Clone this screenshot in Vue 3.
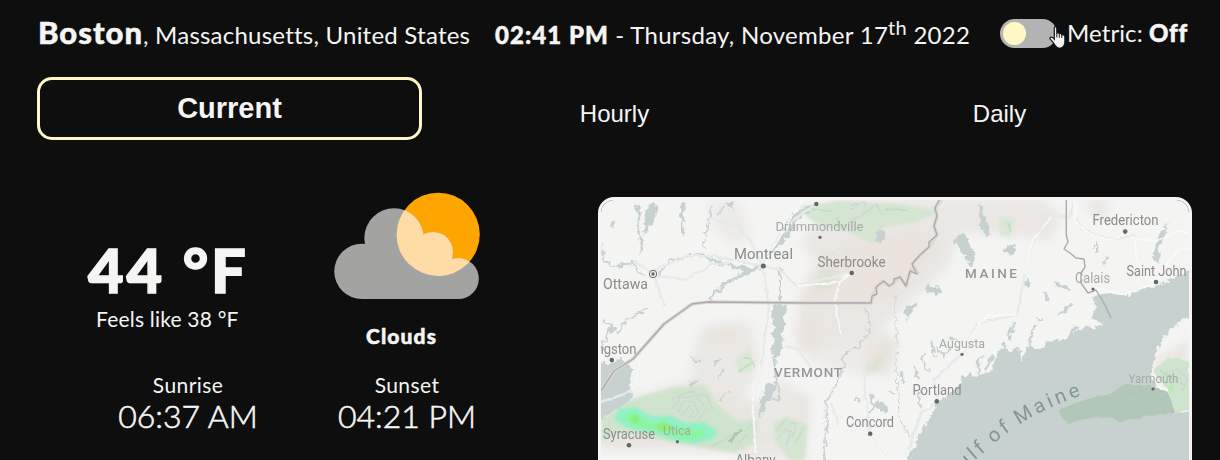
<script setup>
const tabs = [
  { label: 'Current', active: true },
  { label: 'Hourly', active: false },
  { label: 'Daily', active: false },
]
const cities = [
  { n: 'Ottawa', x: 603, y: 289, w: 45, s: 14.5 },
  { n: 'Montreal', x: 734, y: 258.5, w: 59, s: 15 },
  { n: 'Drummondville', x: 775.5, y: 231, w: 88, s: 13.5, dx: 820, dy: 237.3, light: true },
  { n: 'Sherbrooke', x: 817.5, y: 267, w: 68, s: 13.8, dx: 851.7, dy: 273 },
  { n: 'Fredericton', x: 1092.5, y: 224.7, w: 66, s: 13.8, dx: 1125.2, dy: 231.6 },
  { n: 'Calais', x: 1075, y: 283, w: 35, s: 13.8, dx: 1093, dy: 289, light: true },
  { n: 'Saint John', x: 1126.5, y: 276, w: 60, s: 13.8, dx: 1156, dy: 282 },
  { n: 'Syracuse', x: 603, y: 439, w: 52, s: 13.8, dx: 629, dy: 445.3 },
  { n: 'Utica', x: 663, y: 435.3, w: 28, s: 13, dx: 677.4, dy: 441.7, light: true },
  { n: 'Concord', x: 846, y: 427.3, w: 48, s: 13.8, dx: 870.2, dy: 433.8 },
  { n: 'Portland', x: 912.5, y: 395, w: 49, s: 13.8, dx: 936.8, dy: 401.4 },
  { n: 'Augusta', x: 939, y: 348, w: 46, s: 13.5, dx: 962, dy: 354.3, light: true },
  { n: 'Yarmouth', x: 1128.5, y: 383, w: 50, s: 12.5, dx: 1153, dy: 389, light: true },
  { n: 'Albany', x: 735.5, y: 464.5, w: 40, s: 13.8 },
]
</script>

<template>
  <main class="app">
    <header class="header">
      <div class="place"><b>Boston</b><span>, Massachusetts, United States</span></div>
      <div class="date"><b>02:41 PM</b><span> - Thursday, November 17<sup>th</sup> 2022</span></div>
      <div class="units">
        <span class="switch"><i></i></span>
        <span class="metric">Metric: <b>Off</b></span>
        <svg class="cursor" width="18" height="23" viewBox="0 0 18 23">
          <path d="M5.3 2.2Q5.3 .7 6.5 .7T7.8 2.2V7.4Q8 6.5 9 6.6T10.3 8Q10.5 7.2 11.6 7.4T12.8 9Q13.2 8.4 14.2 8.7T15.9 10.6V16Q15.9 18.2 14.8 19.8Q13.6 22.3 10.8 22.3Q7.7 22.3 6.1 19.4L3.9 16.1L.9 12.8Q.7 11.3 2 11Q3.5 10.9 5.3 13.2Z" fill="#f5f5f4" stroke="#111218" stroke-width="1.2" />
          <path d="M7.8 7V11.4M10.3 8V11.7M12.8 8.9V12" stroke="#222" fill="none" />
        </svg>
      </div>
    </header>

    <nav class="tabs">
      <button v-for="t in tabs" :key="t.label" :class="{ active: t.active }">{{ t.label }}</button>
    </nav>

    <section class="content">
      <div class="weather">
        <div class="temp">
          <div class="degrees">44 °F</div>
          <div class="feels">Feels like 38 °F</div>
        </div>
        <div class="sky">
          <svg width="148" height="110" viewBox="333 191 148 110">
            <defs>
              <clipPath id="sun"><circle cx="438.2" cy="234.3" r="41.6" /></clipPath>
              <g id="cloud">
                <circle cx="362" cy="271.4" r="27.7" />
                <circle cx="394" cy="238" r="29.7" />
                <circle cx="433" cy="252" r="20" />
                <circle cx="458.3" cy="278.6" r="20.5" />
                <path d="M362 244H366V236H423L452 257L458 299.1H362Z" />
              </g>
            </defs>
            <circle cx="438.2" cy="234.3" r="41.6" fill="#ffa500" />
            <use href="#cloud" fill="#a3a3a2" />
            <use href="#cloud" fill="#ffdba5" clip-path="url(#sun)" />
          </svg>
          <b>Clouds</b>
        </div>
        <div class="event rise"><span>Sunrise</span><strong>06:37 AM</strong></div>
        <div class="event set"><span>Sunset</span><strong>04:21 PM</strong></div>
      </div>

      <div class="map">
        <svg width="588" height="260" viewBox="601 200 588 260">
          <defs>
            <filter id="rough" x="-5%" y="-5%" width="110%" height="110%">
              <feTurbulence type="fractalNoise" baseFrequency=".16" numOctaves="3" seed="4" />
              <feDisplacementMap in="SourceGraphic" scale="9" xChannelSelector="R" yChannelSelector="G" />
            </filter>
            <filter id="fine" x="-5%" y="-5%" width="110%" height="110%">
              <feTurbulence type="fractalNoise" baseFrequency=".12" numOctaves="2" seed="8" />
              <feDisplacementMap in="SourceGraphic" scale="4" xChannelSelector="R" yChannelSelector="G" />
            </filter>
            <filter id="soft" x="-20%" y="-20%" width="140%" height="140%"><feGaussianBlur stdDeviation="5" /></filter>
            <filter id="glow" x="-20%" y="-20%" width="140%" height="140%"><feGaussianBlur stdDeviation="1.6" /></filter>
            <path id="gulf" d="M945 487Q968 466 990 447T1027 420Q1050 406 1085 394" />
          </defs>
          <rect x="601" y="200" width="588" height="260" fill="#f4f4f3" />

          <g filter="url(#soft)" fill="#e9e6e2">
            <path d="M708 200H738L752 236L732 246L712 224Z" opacity=".6" />
            <path d="M835 200H1040L1062 215L1050 240L1010 235L960 232L945 270L910 300L870 340L800 350L798 300L820 260L800 245Z" opacity=".9" />
            <path d="M705 325L750 322L760 360L745 400L720 392L690 385L695 345Z" opacity=".8" />
            <path d="M800 310H860L880 350L865 375L820 365L800 350Z" opacity=".7" />
            <path d="M780 380L812 400L805 460H735L740 430Z" opacity=".8" />
            <path d="M1085 200H1108L1105 217L1092 215Z" />
            <path d="M1155 360L1189 340V375L1155 375Z" />
            <path d="M875 330L900 340L890 375L862 372Z" />
            <path d="M601 430L640 395L700 378L760 405L780 450H601Z" />
          </g>
          <g filter="url(#soft)" fill="#ead9cf" opacity=".3">
            <path d="M815 255L920 230L935 250L885 300H805Z" />
            <path d="M703 332L738 326V345L710 344Z" />
            <path d="M795 320L820 325L812 350L795 345Z" />
            <path d="M875 345L892 348L880 370L866 370Z" />
            <path d="M795 395L805 400V425L797 432Z" />
          </g>
          <g filter="url(#glow)" fill="#d0e4cd">
            <path d="M800 207L837 201L900 204L940 211L915 222L881 228L872 244L850 232L820 225L808 218Z" opacity=".85" />
            <path d="M820 272L836 268L833 287L815 290Z" opacity=".55" />
            <path d="M1000 217L1015 220L1010 238L999 234Z" opacity=".6" />
            <path d="M735 360L750 348L754 370L740 374Z" opacity=".6" />
            <path d="M866 366L884 356L878 371L867 374Z" opacity=".55" />
            <path d="M601 418L628 400L675 387L705 385L718 405L738 421L757 419L756 442L736 453L703 448L660 440L620 432L601 442Z" />
            <path d="M773 425L785 416L808 425L805 460H790L775 441Z" opacity=".85" />
          </g>

          <g fill="#c7d2d0" filter="url(#rough)">
            <path d="M906 465L912 451L922 427L933 415L937 402L949 395L960 385L963 374L977 376L992 370L997 353L1005 345L1010 352L1021 348L1022 360L1029 344L1038 349L1051 340L1063 339L1073 333L1083 328L1094 329L1102 323L1089 318L1098 306L1092 298L1102 294L1113 293L1125 297L1143 289L1160 285L1173 278L1195 268V314L1171 328L1163 337L1157 348L1152 363L1151 376L1157 388L1169 399L1175 413L1187 412L1195 410V465Z" />
            <path d="M596 366L611 361L623 360L632 369L629 386L634 391L628 403L612 412L596 423Z" />
            <path d="M772 303L785 304L782 347L778 358L774 355Z" />
            <path d="M794 212L812 205L809 213L799 219L786 241L770 254L776 242Z" />
            <path d="M960 233L969 241L975 254L971 266L963 254L954 241Z" />
            <path d="M979 201L990 228L987 238L979 226Z" />
            <path d="M878 398L889 410L884 414L874 406Z" />
            <path d="M649 205L660 206L652 221L646 236L643 230Z" />
            <path d="M636 205L640 204L639 223L643 246L640 256L638 230Z" />
            <path d="M681 203H685L684 235H681ZM726 202H735L732 208Z" />
            <path d="M1162 230L1168 224L1160 248L1157 265L1153 250Z" />
            <path d="M1094 241L1099 253H1094ZM1105 256L1109 257L1104 264ZM1052 282L1066 285L1069 289L1056 287ZM1003 249L1015 244L1013 255L1006 254Z" />
            <path d="M927 286L942 288L939 294L926 292ZM903 307L916 304L909 320L901 311ZM877 241L879 229L885 233L880 245Z" />
            <path d="M767 382L776 387L761 414L757 413ZM688 381L698 382L690 387Z" />
            <path d="M610 222L615 221L614 229L610 228ZM610 324L616 330L612 334Z" />
          </g>
          <g fill="none" stroke="#c7d2d0" filter="url(#rough)">
            <path d="M601 243L603 260L616 267L633 262L638 271L645 277" stroke-width="2" />
            <path d="M713 261L727 265L746 270L762 266L739 276L721 287L709 301" stroke-width="3" />
            <path d="M657 277L668 262L685 257L702 254L713 260" stroke-width="2" />
            <path d="M780 268V303M785 304L783 326L773 350L776 379L780 398L766 401L759 417" stroke-width="2.2" />
            <path d="M865 306L870 321L869 334L855 348L844 354L843 370L827 402L824 460" stroke-width="1.6" />
            <path d="M896 293V329L897 371L899 415L909 439" stroke-width="1" />
            <path d="M601 320L613 325L600 350M617 335L624 323L634 315L648 309M693 359L701 361M714 364L720 359M717 380L725 371M719 401L730 391" stroke-width="2" />
            <path d="M712 205L707 224L707 238M703 242L705 249M724 205L718 216" stroke-width="1.7" />
            <path d="M923 353L924 368L931 370M914 367L918 378M931 341L936 357M950 338L957 341M936 348L944 356L952 347M917 390L922 408M901 370L903 382" stroke-width="2" />
            <path d="M870 396L873 405L870 413M856 397L859 403M890 391L893 394" stroke-width="3" />
            <path d="M1078 325L1070 334M1058 316L1068 308L1074 302M1036 318L1043 319M1029 344L1035 325M1009 338L1014 325M1045 291L1048 300M1026 278L1028 286" stroke-width="3" />
            <path d="M978 375V361L984 356M985 370L993 355M1002 358L1004 343" stroke-width="2.5" />
          </g>
          <path d="M1153 370L1170 357L1189 362V411L1175 413L1168 390Z" fill="#cfe4cc" filter="url(#fine)" />

          <g fill="none" stroke="#e6ebe9" stroke-width="2.4" filter="url(#fine)">
            <path d="M633 260L654 274L664 306L672 320M653 271L687 256L713 256L763 266L781 270L796 286L827 278L851 273M657 276L687 279L713 264L730 263M763 266L750 240L735 225L710 219M763 264L780 235L802 213L816 205M763 266L769 308L761 365L752 395L756 453M822 238L841 255" />
            <path d="M838 325L849 347L862 355L865 390L870 434M831 403L839 425L868 433L887 460M908 450L921 414L937 402L934 380L962 354L978 323L1017 315L1025 273L1035 235L1051 217H1070L1074 201M1077 218L1082 230L1112 240L1135 235M601 402L633 391L640 365L643 350M785 345L800 350L818 380" />
          </g>
          <g fill="none" stroke="#fbfbfa" stroke-width="1.4" filter="url(#fine)">
            <path d="M1074 200L1076 220L1085 232L1113 241L1125 232L1135 239L1157 241L1174 232H1189M1135 241L1136 255L1143 275L1156 283L1126 294L1093 289M1156 282L1166 266L1178 249L1189 248M1025 274L1033 240L1051 217M801 201L763 266M797 286L840 282L853 273L841 278L835 304L841 335M977 324L988 315H1017M961 354L981 321L990 318M633 391L640 365L643 350M664 306L672 320M761 365L752 395L756 453M839 425L868 433L887 460" />
          </g>

          <g filter="url(#fine)">
            <g fill="none" stroke="#c9c4df" opacity=".65">
              <path d="M672 409L680 397L696 396L706 408L698 420M677 412L684 401L695 402L699 412L693 419M681 416L688 406L694 411L689 419M672 399L689 391L708 397L713 408M850 205L866 202L860 216L850 222M848 210L858 205M861 216L876 204L883 215M775 432L785 421L796 424L791 439M778 438L786 429L791 432L787 445M1165 373L1178 369L1187 378L1183 391M1168 380L1180 377L1183 386M742 432L752 424M735 445L748 435" />
            </g>
            <g stroke="#b2dfb6" stroke-width="1.8" fill="none" opacity=".7">
              <path d="M739 371L751 364M744 358H750L754 367M810 209L833 212M835 218L845 231M885 210L907 209M668 434L679 429M712 446L738 432M795 443L803 429M1160 371L1183 385M1008 223L1011 231" />
            </g>
            <path d="M730 443L736 433L742 430" fill="none" stroke="#b0c8b8" stroke-width="3" />
          </g>
          <path d="M1058 411L1066 407L1084 400L1110 394L1123 385H1150L1168 392L1175 412L1153 415L1139 418L1123 422L1105 417L1086 418L1070 423L1063 419Z" fill="#b1c7b8" filter="url(#fine)" />
          <path d="M1098 411Q1110 400 1121 398Q1135 390 1145 390Q1137 400 1148 403Q1161 403 1168 396M1113 409L1128 416" fill="none" stroke="#aebfcb" stroke-width="1" filter="url(#fine)" />
          <g filter="url(#glow)">
            <path d="M614 420L619 409L635 407L651 416L671 416L684 423L704 422L718 432L713 439L694 444L671 440L656 434L631 429Z" fill="#91f0c5" />
            <path d="M622 419L633 411L645 419L656 425L676 427L690 429L705 429L703 437L684 440L662 432L635 426Z" fill="#8bf69f" />
            <path d="M654 426L664 421L676 429L663 432Z" fill="#8af074" />
            <circle cx="635" cy="419" r="4" fill="#80f080" />
            <path d="M1168 388L1174 384L1172 392Z" fill="#a3edab" />
          </g>

          <g fill="none" stroke="#adabaa" stroke-width="1.4" stroke-linejoin="round">
            <path d="M601 391L614 371L633 359L664 324L692 304L708 302L809 303H871L876 288L882 281L890 286L900 277L906 286L911 269L918 273L912 264L920 255L929 247L937 235L934 226L937 216L935 208L942 200" stroke="#dcd8d6" stroke-width="3.5" />
            <path d="M601 391L614 371L633 359L664 324L692 304L708 302L809 303H871L872 296L877 294L876 287L884 281L889 286L894 283V279L900 277L906 286L910 271L917 274L912 264L920 255L929 247L929 242L937 235L934 226L937 216L935 208L939 200" />
            <path d="M1066.300 200V235L1068 242L1064 249L1070 253L1076 258L1084 259L1085 267L1081 273V283L1088 293L1096 290L1105 305L1111 318" />
          </g>

          <g class="city">
            <text v-for="c in cities" :key="c.n" :x="c.x" :y="c.y" :textLength="c.w" lengthAdjust="spacingAndGlyphs" :font-size="c.s" :fill="c.light ? '#a7a9a6' : '#8b8c8b'">{{ c.n }}</text>
            <text x="596.500" y="354" textLength="40" lengthAdjust="spacingAndGlyphs" font-size="13.800" fill="#8b8c8b">ngston</text>
            <template v-for="c in cities" :key="c.n + 'dot'">
              <circle v-if="c.dx" :cx="c.dx" :cy="c.dy" :r="c.light ? 1.6 : 2.3" fill="#666" />
            </template>
            <circle cx="763.300" cy="266" r="2.500" fill="#666" />
            <circle cx="816.3" cy="204" r="2.2" fill="#666" />
            <circle cx="611.8" cy="360" r="2.3" fill="#666" />
            <circle cx="653" cy="274" r="3.7" fill="#f4f4f3" stroke="#666" />
            <circle cx="653" cy="274" r="1.7" fill="#666" />
          </g>
          <g class="state">
            <text x="965" y="278" textLength="52">MAINE</text>
            <text x="774" y="377" textLength="68">VERMONT</text>
          </g>
          <text class="water"><textPath href="#gulf" startOffset="8">Gulf of Maine</textPath></text>
        </svg>
      </div>
    </section>
  </main>
</template>

<style>
body { background: #0e0e0e; overflow: hidden; }
</style>

<style scoped>
.app { height: 460px; overflow: hidden; background: #0e0e0e; color: #f5f5f4; font-family: Lato, "Open Sans", sans-serif; }
.header { display: grid; grid-template-columns: 457px 505px 1fr; padding: 0 32px 0 38px; height: 77px; box-sizing: border-box; white-space: pre; font-size: 24px; line-height: 40px; }
.header > div { padding-top: 15px; }
.header .place { padding-top: 12px; letter-spacing: .23px; }
.place b { font-size: 31px; font-weight: 900; letter-spacing: 1px; -webkit-text-stroke: .5px #f5f5f4; }
.date { letter-spacing: .28px; }
.date b { font-weight: 900; letter-spacing: 1.05px; -webkit-text-stroke: .5px #f5f5f4; }
sup { font-size: 20px; line-height: 0; vertical-align: baseline; position: relative; top: -9px; }
.header .units { position: relative; display: flex; align-items: flex-start; padding-top: 13px; }
.switch { display: flex; align-items: center; width: 57px; height: 29px; margin: 6px 10px 0 0; padding-left: 3px; box-sizing: border-box; border-radius: 15px; background: #b3b3b3; }
.switch i { width: 23px; height: 23px; border-radius: 50%; background: #fff8c6; }
.metric { letter-spacing: .1px; }
.metric b { font-weight: 900; letter-spacing: .7px; -webkit-text-stroke: .5px #f5f5f4; }
.cursor { position: absolute; left: 49px; top: 26px; }
.tabs { display: grid; grid-template-columns: 385px 385px 385px; padding-left: 37px; height: 63px; }
.tabs button { border: 0; background: none; color: #f5f5f4; font: 24px/29px "Liberation Sans", Arial, sans-serif; padding: 10px 0 0; }
.tabs button.active { border: 3px solid #fff8c6; border-radius: 15px; font-size: 29px; font-weight: 700; padding: 0; }
.content { display: grid; grid-template-columns: 598px 594px; padding-top: 57px; }
.weather { display: grid; grid-template-columns: 296px 302px; grid-template-rows: 170px 80px; }
.temp { padding: 37px 0 0 88px; white-space: nowrap; }
.degrees { font-size: 61.5px; font-weight: 900; line-height: 70px; letter-spacing: 2.9px; -webkit-text-stroke: 1.5px #f5f5f4; }
.feels { font-size: 21px; line-height: 28px; padding: 1px 0 0 8px; letter-spacing: .2px; }
.sky { display: flex; flex-direction: column; width: 148px; margin: -6px 0 0 37px; align-items: center; }
.sky b { font-size: 21px; font-weight: 900; line-height: 28px; margin: 21px 11px 0 0; letter-spacing: 1.1px; -webkit-text-stroke: .5px #f5f5f4; }
.event { display: flex; flex-direction: column; align-items: center; white-space: nowrap; }
.event span { font-size: 21px; line-height: 28px; margin-top: 4px; letter-spacing: .4px; }
.event strong { font-size: 32px; font-weight: 300; line-height: 34px; -webkit-text-stroke: .6px #f5f5f4; }
.rise { padding-left: 80px; }
.set { padding-right: 80px; }
.map { width: 594px; height: 300px; box-sizing: border-box; overflow: hidden; border: 3px solid #f7f5f4; border-radius: 16px; }
.map svg { display: block; }
.city, .state, .water { font-family: Roboto, sans-serif; }
.state { font-size: 13.5px; font-weight: 500; fill: #969897; }
.water { font-size: 20px; letter-spacing: 3.5px; word-spacing: -2px; fill: #81969a; }
</style>
